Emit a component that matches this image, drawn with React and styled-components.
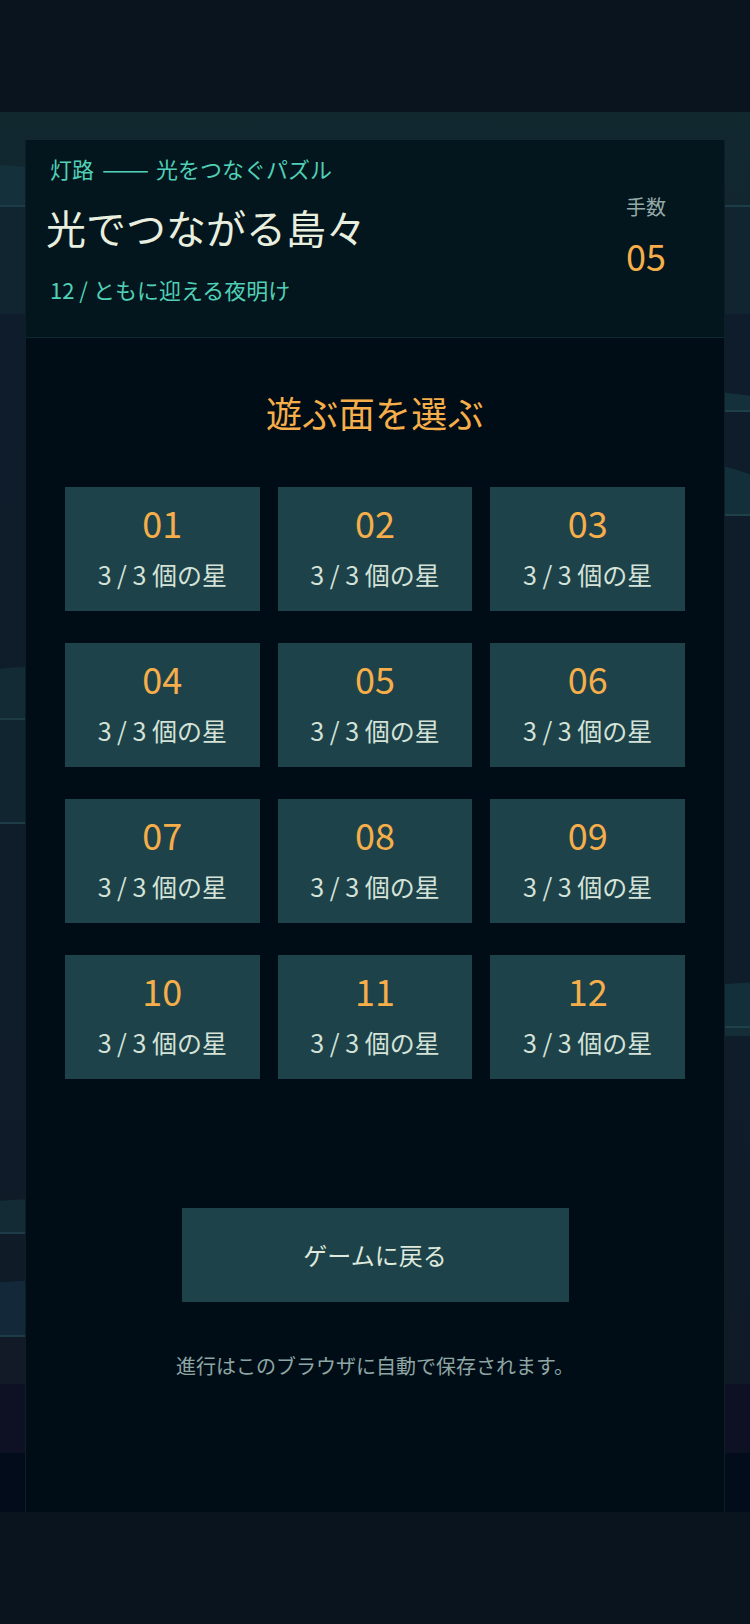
import React from "react";
import styled, { createGlobalStyle } from "styled-components";

const GlobalStyle = createGlobalStyle`
  html, body {
    margin: 0;
    padding: 0;
    background: #09141f;
  }
  body {
    font-family: "Noto Sans CJK JP", "Noto Sans", sans-serif;
    -webkit-font-smoothing: antialiased;
  }
`;

const Page = styled.div`
  width: 750px;
  min-height: 1624px;
  background: #09141f;
  padding-top: 112px;
  box-sizing: border-box;
`;

const Stage = styled.section`
  position: relative;
  height: 1400px;
  padding: 28px 25px 0;
  box-sizing: border-box;
  overflow: hidden;
  background: linear-gradient(
    180deg,
    #12282f 0px,
    #10242d 200px,
    #0f1c2b 202px,
    #0f1d2a 800px,
    #101a27 1272px,
    #0e1024 1272px,
    #0e1024 1341px,
    #020c1b 1341px
  );
`;

const Scenery = styled.svg`
  position: absolute;
  inset: 0;
  width: 750px;
  height: 1400px;
  pointer-events: none;
`;

const Card = styled.div`
  position: relative;
  height: 1372px;
  background: #000d16;
  border-left: 1px solid #0c1f27;
  border-right: 1px solid #0c1f27;
  box-sizing: border-box;
  display: flex;
  flex-direction: column;
`;

const Header = styled.header`
  display: flex;
  justify-content: space-between;
  align-items: flex-start;
  padding: 14px 58px 34px 24px;
  background: #03151d;
  border-bottom: 1px solid #0d2a32;
`;

const HeadText = styled.div`
  display: flex;
  flex-direction: column;
`;

const Eyebrow = styled.div`
  font-size: 22px;
  line-height: 28px;
  color: #50d0b6;
  margin-top: ${(p) => p.gap || 0}px;
`;

const Dash = styled.span`
  display: inline-block;
  width: 46px;
  margin: 0 8px;
  transform: scaleX(1.28);
  transform-origin: left center;
`;

const Title = styled.h1`
  margin: 19px 0 0 -4px;
  font-size: 40px;
  line-height: 52px;
  font-weight: 400;
  color: #e9efdf;
`;

const Stat = styled.div`
  margin-top: 39px;
  display: flex;
  flex-direction: column;
  align-items: center;
`;

const StatLabel = styled.span`
  font-size: 20px;
  line-height: 28px;
  color: #93aaa8;
`;

const StatValue = styled.span`
  margin-top: 12px;
  font-size: 36px;
  line-height: 44px;
  color: #f6ae4a;
`;

const Body = styled.main`
  padding: 50px 39px 0;
  display: flex;
  flex-direction: column;
  align-items: center;
`;

const Heading = styled.h2`
  margin: 0;
  font-size: 36px;
  line-height: 48px;
  font-weight: 400;
  color: #f6ae4a;
  letter-spacing: 0.01em;
`;

const Grid = styled.div`
  margin-top: 51px;
  width: 100%;
  display: grid;
  grid-template-columns: repeat(3, 1fr);
  column-gap: 18px;
  row-gap: 32px;
`;

const Tile = styled.button`
  height: 124px;
  padding: 13px 0 0;
  border: none;
  background: #1d424a;
  font-family: inherit;
  display: flex;
  flex-direction: column;
  align-items: center;
  cursor: pointer;
`;

const TileNum = styled.span`
  font-size: 36px;
  line-height: 44px;
  color: #f6ae4a;
`;

const TileStars = styled.span`
  margin-top: 14px;
  font-size: 25px;
  line-height: 32px;
  color: #d5e2d8;
`;

const BackButton = styled.button`
  margin-top: 129px;
  width: 387px;
  height: 94px;
  border: none;
  background: #1d424a;
  color: #dfe9dc;
  font-family: inherit;
  font-size: 24px;
  line-height: 32px;
  cursor: pointer;
`;

const Note = styled.p`
  margin: 50px 0 0;
  font-size: 20px;
  line-height: 28px;
  color: #8ea6a4;
`;

const levels = Array.from({ length: 12 }, (_, i) => String(i + 1).padStart(2, "0"));

// island silhouettes behind the card (stage coords, y = page y - 112)
const Backdrop = () => (
  <Scenery viewBox="0 0 750 1400">
    <path d="M-20 52 Q 60 56 180 70 L 180 93 L -20 93 Z" fill="#14303a" />
    <rect x="0" y="93" width="750" height="2" fill="#1c3d47" />
    <rect x="0" y="95" width="750" height="107" fill="#102530" />

    <path d="M600 269 Q 680 274 760 285 L 760 298 L 600 298 Z" fill="#14303a" />
    <rect x="700" y="298" width="50" height="2" fill="#1c3f48" />
    <path d="M690 350 Q 720 350 760 366 L 760 402 L 690 402 Z" fill="#13303a" />
    <rect x="700" y="402" width="50" height="2" fill="#1d4049" />

    <path d="M-20 560 Q 20 552 60 556 L 60 606 L -20 606 Z" fill="#132b34" />
    <rect x="0" y="606" width="60" height="2" fill="#1c3b45" />
    <rect x="0" y="608" width="60" height="102" fill="#112530" />
    <rect x="0" y="710" width="60" height="2" fill="#1d3c47" />

    <path d="M690 875 Q 720 872 760 870 L 760 914 L 690 914 Z" fill="#13303a" />
    <rect x="700" y="914" width="50" height="2" fill="#1d4049" />
    <rect x="700" y="916" width="50" height="8" fill="#142d36" />

    <path d="M-20 1090 L 60 1085 L 60 1120 L -20 1120 Z" fill="#132b35" />
    <rect x="0" y="1120" width="60" height="2" fill="#1d3c47" />
    <path d="M-20 1172 Q 20 1168 60 1168 L 60 1223 L -20 1223 Z" fill="#13293a" />
    <rect x="0" y="1223" width="60" height="2" fill="#1d3c47" />
    <rect x="0" y="1225" width="60" height="47" fill="#111a26" />
  </Scenery>
);

const App = () => {
  return (
    <>
      <GlobalStyle />
      <Page>
        <Stage>
          <Backdrop />
          <Card>
            <Header>
              <HeadText>
                <Eyebrow>
                  灯路<Dash>——</Dash>光をつなぐパズル
                </Eyebrow>
                <Title>光でつながる島々</Title>
                <Eyebrow gap={22}>12 / ともに迎える夜明け</Eyebrow>
              </HeadText>
              <Stat>
                <StatLabel>手数</StatLabel>
                <StatValue>05</StatValue>
              </Stat>
            </Header>
            <Body>
              <Heading>遊ぶ面を選ぶ</Heading>
              <Grid>
                {levels.map((n) => (
                  <Tile key={n}>
                    <TileNum>{n}</TileNum>
                    <TileStars>3 / 3 個の星</TileStars>
                  </Tile>
                ))}
              </Grid>
              <BackButton>ゲームに戻る</BackButton>
              <Note>進行はこのブラウザに自動で保存されます。</Note>
            </Body>
          </Card>
        </Stage>
      </Page>
    </>
  );
};

export default App;
